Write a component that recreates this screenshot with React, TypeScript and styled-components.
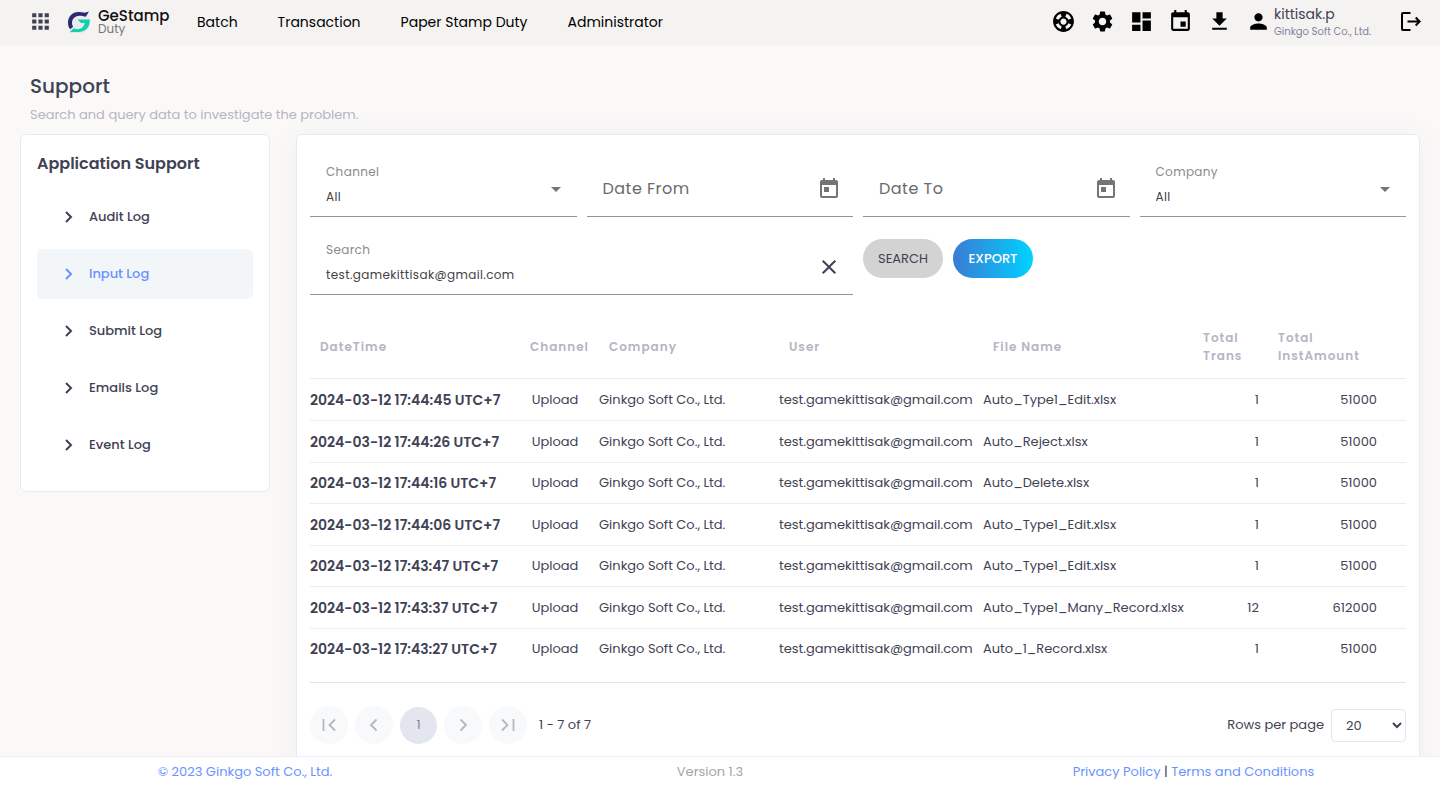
import React from 'react';
import styled, { createGlobalStyle } from 'styled-components';
import {
  MdApps, MdSupport, MdSettings, MdDashboard, MdEvent, MdFileDownload, MdPerson,
  MdToday, MdClose, MdArrowDropDown,
} from 'react-icons/md';

const GlobalStyle = createGlobalStyle`
  *, *::before, *::after { box-sizing: border-box; }
  body {
    margin: 0;
    height: 100vh;
    overflow: hidden;
    background: #faf9f8;
    color: #3f4254;
    font-family: Poppins, Inter, sans-serif;
    font-size: 13px;
    line-height: 20px;
  }
  #root { height: 100%; }
  button, input, select { font: inherit; color: inherit; }
  button { border: 0; background: none; padding: 0; cursor: pointer; }
  a { color: inherit; text-decoration: none; }
  svg { display: block; flex: none; }
`;

const Page = styled.div`
  height: 100%;
  display: flex;
  flex-direction: column;
`;

const TopBar = styled.header`
  display: flex;
  align-items: center;
  height: 45px;
  flex: none;
  padding: 0 19px 2px 28px;
  background: #f5f3f2;
`;

const AppsButton = styled.button`
  color: #3f4254;
  margin-right: 14px;
`;

const Brand = styled.a`
  display: flex;
  align-items: center;
  gap: 7px;
  width: 130px;
`;

const BrandText = styled.span`
  display: flex;
  flex-direction: column;
  font-size: 15px;
  line-height: 14px;
  font-weight: 500;
  color: #111;
`;

const BrandSub = styled.span`
  font-size: 12px;
  line-height: 12px;
  font-weight: 400;
  color: #777;
`;

const MainNav = styled.nav`
  display: flex;
  gap: 40px;
  font-size: 14px;
  color: #000;
`;

const Tools = styled.div`
  display: flex;
  align-items: center;
  gap: 14px;
  margin-left: auto;
  color: #000;
`;

const ToolButton = styled.button`
  font-size: 25px;
`;

const Account = styled.div`
  display: flex;
  align-items: center;
  gap: 3px;
  width: 140px;
`;

const User = styled.div`
  display: flex;
  flex-direction: column;
  padding-top: 2px;
  font-size: 14px;
  line-height: 18px;
  color: #3f4254;
`;

const UserCompany = styled.span`
  font-size: 10px;
  color: #7e8299;
`;

const Heading = styled.div`
  flex: none;
  padding: 28px 30px 9px;
`;

const Title = styled.h1`
  margin: 0;
  font-size: 20px;
  line-height: 26px;
  font-weight: 500;
`;

const Subtitle = styled.p`
  margin: 6px 0 0;
  color: #b5b5c3;
`;

const Content = styled.main`
  flex: 1;
  min-height: 0;
  display: grid;
  grid-template-columns: 250px minmax(0, 1fr);
  gap: 26px;
  align-items: start;
  padding: 0 20px;
`;

const Card = styled.section`
  background: #fff;
  border: 1px solid #e8eaf3;
  border-radius: 6px;
`;

const SideCard = styled(Card)`
  padding: 17px 16px 21px;
`;

const SideTitle = styled.h2`
  margin: 0 0 16px;
  font-size: 16px;
  line-height: 24px;
  font-weight: 600;
`;

const SideNav = styled.nav`
  display: flex;
  flex-direction: column;
  gap: 7px;
`;

const SideLink = styled.a<{ $active?: boolean }>`
  display: flex;
  align-items: center;
  gap: 16px;
  height: 50px;
  padding-left: 28px;
  border-radius: 6px;
  font-weight: 500;
  color: ${(p) => (p.$active ? '#6993ff' : '#3f4254')};
  background: ${(p) => (p.$active ? '#f3f6f9' : 'transparent')};
`;

const MainCard = styled(Card)`
  padding: 15px 13px 40px;
  box-shadow: 0 0 30px rgba(82, 63, 105, 0.05);
`;

const Filters = styled.form`
  display: grid;
  grid-template-columns: repeat(4, minmax(0, 1fr));
  gap: 11px 10px;
`;

const Field = styled.div<{ $wide?: boolean }>`
  grid-column: span ${(p) => (p.$wide ? 2 : 1)};
  display: flex;
  align-items: center;
  height: 67px;
  padding: 12px 9px 0 16px;
  border-bottom: 1px solid #949494;
  color: #757575;
`;

const FieldBody = styled.div`
  flex: 1;
  min-width: 0;
  display: flex;
  flex-direction: column;
  gap: 5px;
  padding-bottom: 10px;
`;

const FieldLabel = styled.label`
  font-size: 12px;
  letter-spacing: 0.03em;
  color: #8b8b8b;
`;

const fieldText = `
  width: 100%;
  height: 20px;
  padding: 0;
  border: 0;
  outline: 0;
  background: none;
  appearance: none;
  color: #444;
  letter-spacing: 0.03em;
`;

const FieldSelect = styled.select`
  ${fieldText}
  && { font-size: 12px; }
`;

const FieldInput = styled.input`
  ${fieldText}
  && { font-size: 12px; }
`;

const DateInput = styled.input`
  ${fieldText}
  && { font-size: 16px; }
  &::placeholder { color: #6b6b6b; opacity: 1; }
`;

const IconButton = styled.button<{ $dark?: boolean }>`
  font-size: 24px;
  margin-right: 3px;
  color: ${(p) => (p.$dark ? '#3f4254' : '#757575')};
`;

const Actions = styled.div`
  display: flex;
  gap: 10px;
  padding-top: 11px;
`;

const PillButton = styled.button<{ $primary?: boolean }>`
  width: 80px;
  height: 39px;
  border-radius: 20px;
  font-weight: ${(p) => (p.$primary ? 500 : 400)};
  color: ${(p) => (p.$primary ? '#fff' : '#3f4254')};
  background: ${(p) => (p.$primary ? 'linear-gradient(90deg, #3a7bd5, #00d2ff)' : '#d3d3d3')};
`;

const LogTable = styled.table`
  width: 100%;
  margin-top: 19px;
  table-layout: fixed;
  border-collapse: collapse;
  white-space: nowrap;
`;

const HeadCell = styled.th`
  height: 64px;
  padding: 2px 10px 0;
  text-align: left;
  font-size: 12px;
  line-height: 18px;
  font-weight: 600;
  letter-spacing: 1px;
  color: #b5b5c3;
  white-space: pre-line;
  border-bottom: 1px solid #ebedf3;
`;

const Row = styled.tr`
  height: 42px;
  &:not(:last-child) { border-bottom: 1px solid #ebedf3; }
  &:nth-child(odd):not(:first-child) { height: 41px; }
`;

const Cell = styled.td<{ $kind?: 'date' | 'center' | 'total' | 'amount' }>`
  padding: 1px 0 0;
  font-size: ${(p) => (p.$kind === 'date' ? '14px' : '13px')};
  font-weight: ${(p) => (p.$kind === 'date' ? 600 : 400)};
  text-align: ${(p) => (p.$kind === 'center' ? 'center' : p.$kind === 'total' || p.$kind === 'amount' ? 'right' : 'left')};
  padding-right: ${(p) => (p.$kind === 'total' || p.$kind === 'center' ? '9px' : p.$kind === 'amount' ? '29px' : '0')};
`;

const Pager = styled.div`
  display: flex;
  align-items: center;
  justify-content: space-between;
  margin-top: 13px;
  padding-top: 23px;
  border-top: 1px solid #e4e4e8;
`;

const PagerGroup = styled.div`
  display: flex;
  align-items: center;
  gap: 7px;
`;

const PageButton = styled.button<{ $current?: boolean }>`
  display: grid;
  place-items: center;
  width: ${(p) => (p.$current ? '37px' : '38px')};
  height: ${(p) => (p.$current ? '37px' : '38px')};
  border-radius: 50%;
  color: ${(p) => (p.$current ? '#7e8299' : '#b5b5c3')};
  background: ${(p) => (p.$current ? '#e4e6ef' : '#f8f9fb')};
`;

const Range = styled.span`
  margin-left: 5px;
`;

const PageSize = styled.select`
  width: 75px;
  height: 33px;
  padding: 1px 0 0 10px;
  border: 1px solid #e4e6ef;
  border-radius: 4px;
  background: #fff;
`;

const Footer = styled.footer`
  position: relative;
  flex: none;
  display: grid;
  grid-template-columns: 49fr 44fr 51fr;
  height: 30px;
  padding-top: 5px;
  text-align: center;
  border-top: 1px solid #ebedf3;
  background: #fff;
  color: #a5a5ab;
`;

const FooterLinks = styled.div`
  color: #6993ff;
  &:last-child { padding-left: 17px; }
`;

const Divider = styled.span`
  color: #3f4254;
`;

const Logo = () => (
  <svg width="24" height="24" viewBox="0 0 24 24" aria-hidden="true">
    <circle cx="12" cy="12" r="11.5" fill="#e9ecec" />
    <path d="M22 1.500 18.800 6.800 14.200 5.800C9.200 5 5 8 5 12.800c0 1.600.4 2.700 1.100 3.900L3.200 19.300C1.600 17.500 1 15.400 1 12.800 1 6.500 5.500 2 11.500 2c2.300 0 4.300.3 6 .8z" fill="#2b2a72" />
    <path d="M10.500 9.500H22.700C23.300 16.500 19 21.700 12.500 21.900L2.500 22.300 6.800 18.200c1.500.8 3 1.100 4.700.9 3.300-.3 5.500-2.600 6.200-6.100h-3.700z" fill="#12cdb0" />
  </svg>
);

const LogoutIcon = () => (
  <svg width="21" height="21" viewBox="0 0 21 21" fill="none" stroke="currentColor" strokeWidth="2" aria-hidden="true">
    <path d="M10.500 2H3a1 1 0 0 0-1 1v15a1 1 0 0 0 1 1h7.500M7.500 10.500H19.500M15.700 6.500l4 4-4 4" />
  </svg>
);

const Chevron = () => (
  <svg width="8" height="12" viewBox="0 0 8 12" fill="none" stroke="currentColor" strokeWidth="2" aria-hidden="true">
    <path d="M1 1l5 5-5 5" />
  </svg>
);

const pagerPaths = {
  first: 'M2.500 1v12M14 1.500 8.500 7l5.500 5.500',
  previous: 'M10.500 1.500 5 7l5.500 5.500',
  next: 'M5.500 1.500 11 7l-5.500 5.500',
  last: 'M2 1.500 7.500 7 2 12.500M13.500 1v12',
};

const PagerIcon = ({ kind }: { kind: keyof typeof pagerPaths }) => (
  <svg width="16" height="14" viewBox="0 0 16 14" fill="none" stroke="currentColor" strokeWidth="1.800" aria-hidden="true">
    <path d={pagerPaths[kind]} />
  </svg>
);

const tools = [
  { label: 'Support', Icon: MdSupport },
  { label: 'Settings', Icon: MdSettings },
  { label: 'Dashboard', Icon: MdDashboard },
  { label: 'Calendar', Icon: MdEvent },
  { label: 'Downloads', Icon: MdFileDownload },
];

const columns = [
  { name: 'DateTime', width: 210 },
  { name: 'Channel', width: 79 },
  { name: 'Company', width: 180 },
  { name: 'User', width: 204 },
  { name: 'File Name', width: 210 },
  { name: 'Total\nTrans', width: 75 },
  { name: 'Total\nInstAmount', width: 138 },
];
const tableWidth = columns.reduce((sum, column) => sum + column.width, 0);

const rows = [
  ['17:44:45', 'Auto_Type1_Edit.xlsx', '1', '51000'],
  ['17:44:26', 'Auto_Reject.xlsx', '1', '51000'],
  ['17:44:16', 'Auto_Delete.xlsx', '1', '51000'],
  ['17:44:06', 'Auto_Type1_Edit.xlsx', '1', '51000'],
  ['17:43:47', 'Auto_Type1_Edit.xlsx', '1', '51000'],
  ['17:43:37', 'Auto_Type1_Many_Record.xlsx', '12', '612000'],
  ['17:43:27', 'Auto_1_Record.xlsx', '1', '51000'],
];

const SelectField = ({ id, label }: { id: string; label: string }) => (
  <Field>
    <FieldBody>
      <FieldLabel htmlFor={id}>{label}</FieldLabel>
      <FieldSelect id={id}><option>All</option></FieldSelect>
    </FieldBody>
    <MdArrowDropDown size={24} />
  </Field>
);

const DateField = ({ label }: { label: string }) => (
  <Field>
    <DateInput aria-label={label} placeholder={label} />
    <IconButton type="button" aria-label={`Choose ${label}`}><MdToday /></IconButton>
  </Field>
);

export default function App() {
  return (
    <Page>
      <GlobalStyle />
      <TopBar>
        <AppsButton aria-label="Apps"><MdApps size={25} /></AppsButton>
        <Brand href="#">
          <Logo />
          <BrandText>GeStamp<BrandSub>Duty</BrandSub></BrandText>
        </Brand>
        <MainNav>
          {['Batch', 'Transaction', 'Paper Stamp Duty', 'Administrator'].map((name) => (
            <a href="#" key={name}>{name}</a>
          ))}
        </MainNav>
        <Tools>
          {tools.map(({ label, Icon }) => (
            <ToolButton key={label} aria-label={label}><Icon /></ToolButton>
          ))}
          <Account>
            <ToolButton aria-label="Account"><MdPerson /></ToolButton>
            <User>kittisak.p<UserCompany>Ginkgo Soft Co., Ltd.</UserCompany></User>
          </Account>
          <button aria-label="Log out"><LogoutIcon /></button>
        </Tools>
      </TopBar>
      <Heading>
        <Title>Support</Title>
        <Subtitle>Search and query data to investigate the problem.</Subtitle>
      </Heading>
      <Content>
        <SideCard>
          <SideTitle>Application Support</SideTitle>
          <SideNav>
            {['Audit Log', 'Input Log', 'Submit Log', 'Emails Log', 'Event Log'].map((name) => (
              <SideLink href="#" key={name} $active={name === 'Input Log'}><Chevron />{name}</SideLink>
            ))}
          </SideNav>
        </SideCard>
        <MainCard>
          <Filters>
            <SelectField id="channel" label="Channel" />
            <DateField label="Date From" />
            <DateField label="Date To" />
            <SelectField id="company" label="Company" />
            <Field $wide>
              <FieldBody>
                <FieldLabel htmlFor="search">Search</FieldLabel>
                <FieldInput id="search" defaultValue="test.gamekittisak@gmail.com" />
              </FieldBody>
              <IconButton type="button" $dark aria-label="Clear search"><MdClose /></IconButton>
            </Field>
            <Actions>
              <PillButton type="button">SEARCH</PillButton>
              <PillButton type="button" $primary>EXPORT</PillButton>
            </Actions>
          </Filters>
          <LogTable>
            <colgroup>
              {columns.map(({ name, width }) => (
                <col key={name} style={{ width: `${(width / tableWidth) * 100}%` }} />
              ))}
            </colgroup>
            <thead>
              <tr>{columns.map(({ name }) => <HeadCell key={name}>{name}</HeadCell>)}</tr>
            </thead>
            <tbody>
              {rows.map(([time, file, total, amount]) => (
                <Row key={time}>
                  <Cell $kind="date">2024-03-12 {time} UTC+7</Cell>
                  <Cell $kind="center">Upload</Cell>
                  <Cell>Ginkgo Soft Co., Ltd.</Cell>
                  <Cell>test.gamekittisak@gmail.com</Cell>
                  <Cell>{file}</Cell>
                  <Cell $kind="total">{total}</Cell>
                  <Cell $kind="amount">{amount}</Cell>
                </Row>
              ))}
            </tbody>
          </LogTable>
          <Pager>
            <PagerGroup>
              <PageButton aria-label="First page"><PagerIcon kind="first" /></PageButton>
              <PageButton aria-label="Previous page"><PagerIcon kind="previous" /></PageButton>
              <PageButton $current>1</PageButton>
              <PageButton aria-label="Next page"><PagerIcon kind="next" /></PageButton>
              <PageButton aria-label="Last page"><PagerIcon kind="last" /></PageButton>
              <Range>1 - 7 of 7</Range>
            </PagerGroup>
            <PagerGroup>
              <label htmlFor="page-size">Rows per page</label>
              <PageSize id="page-size" defaultValue="20"><option>20</option><option>50</option></PageSize>
            </PagerGroup>
          </Pager>
        </MainCard>
      </Content>
      <Footer>
        <FooterLinks><a href="#">© 2023 Ginkgo Soft Co., Ltd.</a></FooterLinks>
        <span>Version 1.3</span>
        <FooterLinks><a href="#">Privacy Policy</a> <Divider>|</Divider> <a href="#">Terms and Conditions</a></FooterLinks>
      </Footer>
    </Page>
  );
}
